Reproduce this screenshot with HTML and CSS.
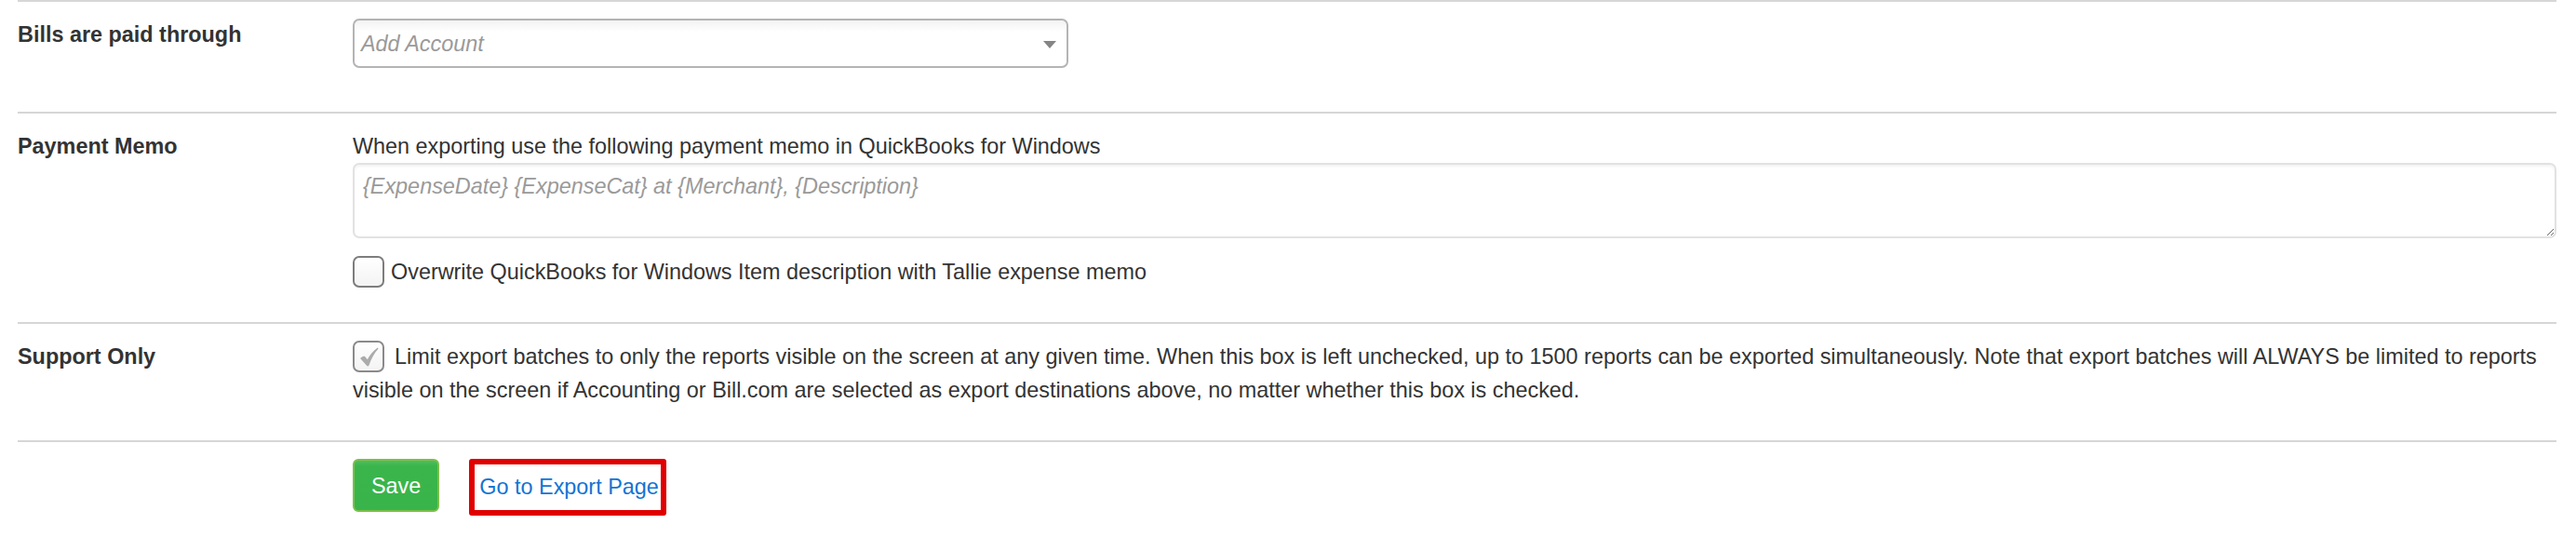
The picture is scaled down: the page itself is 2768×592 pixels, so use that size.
FILE: index.html
```html
<!DOCTYPE html>
<html lang="en">
<head>
    <meta charset="UTF-8">
    <meta name="viewport" content="width=device-width, initial-scale=1.0">
    <title>Export Settings</title>
    <link rel="stylesheet" href="styles.css">
</head>
<body>
    <form class="settings">
        <div class="setting-row">
            <div class="setting-label">Bills are paid through</div>
            <div class="setting-field">
                <div class="account-select">
                    <span class="account-placeholder">Add Account</span>
                    <span class="select-arrow"></span>
                </div>
            </div>
        </div>

        <div class="setting-row">
            <div class="setting-label">Payment Memo</div>
            <div class="setting-field">
                <p>When exporting use the following payment memo in QuickBooks for Windows</p>
                <textarea class="memo" placeholder="{ExpenseDate} {ExpenseCat} at {Merchant}, {Description}"></textarea>
                <label class="check-line">
                    <span class="check-box"></span>Overwrite QuickBooks for Windows Item description with Tallie expense memo
                </label>
            </div>
        </div>

        <div class="setting-row">
            <div class="setting-label">Support Only</div>
            <div class="setting-field">
                <p class="support-text"><span class="check-box checked"><svg viewBox="0 0 20 20" width="21" height="21"><path d="M1 11.5 C2.5 9.8 4.2 8.8 5.6 9.4 L8.4 12.6 C10.8 8 14 4 18.6 0.8 C19.4 0.6 19.8 1.3 19.3 1.9 C15.4 6.2 12.4 11.6 10 18.6 C9.5 19.7 8.2 19.8 7.6 18.8 Z" fill="#ababab"/></svg></span>Limit export batches to only the reports visible on the screen at any given time. When this box is left unchecked, up to 1500 reports can be exported simultaneously. Note that export batches will ALWAYS be limited to reports visible on the screen if Accounting or Bill.com are selected as export destinations above, no matter whether this box is checked.</p>
            </div>
        </div>

        <div class="setting-row last">
            <div class="setting-label"></div>
            <div class="setting-field actions">
                <button type="button" class="btn-save">Save</button>
                <a href="#" class="export-link">Go to Export Page</a>
            </div>
        </div>
    </form>
</body>
</html>
```

FILE: styles.css
```css
*,
*::before,
*::after{
    box-sizing: border-box;
}
body{
    margin: 0;
    background-color: #ffffff;
    color: #333333;
    font-family: "Liberation Sans", Arial, Helvetica, sans-serif;
    font-size: 23.4px;
    line-height: 36px;
}
p{
    margin: 0;
}
.settings{
    padding: 0 21px 0 19px;
}
.setting-row{
    display: flex;
    border-top: 2px solid #d6d6d6;
    padding: 17px 0 36px;
}
.setting-row.last{
    padding-bottom: 40px;
}
.setting-label{
    width: 360px;
    flex: none;
    font-weight: bold;
}
.setting-field{
    flex: 1;
    min-width: 0;
}

/* select2 style dropdown */
.account-select{
    width: 769px;
    height: 53px;
    margin: 1px 0 11px;
    border: 2px solid #b4b4b4;
    border-radius: 7px;
    background: linear-gradient(to bottom, #f2f2f2 0, #ffffff 12px, #ffffff 100%);
    display: flex;
    align-items: center;
    justify-content: space-between;
    padding: 0 11px 0 7px;
}
.account-placeholder{
    color: #9a9a9a;
    font-style: italic;
}
.select-arrow{
    width: 0;
    height: 0;
    border-left: 7px solid transparent;
    border-right: 7px solid transparent;
    border-top: 8px solid #858585;
    margin-top: 2px;
}

.memo{
    display: block;
    width: 100%;
    height: 81px;
    margin: 0;
    padding: 5px 9px 8px;
    border: 2px solid #e2e2e2;
    border-radius: 7px;
    box-shadow: inset 0 2px 3px rgba(0,0,0,0.05);
    font-family: inherit;
    font-size: 23.4px;
    line-height: 36px;
    color: #333333;
    resize: vertical;
    outline: none;
}
.memo::placeholder{
    color: #9a9a9a;
    font-style: italic;
}
.check-line{
    display: block;
    margin-top: 18px;
}
.check-box{
    display: inline-flex;
    align-items: center;
    justify-content: center;
    vertical-align: top;
    width: 34px;
    height: 34px;
    margin: 1px 7px 0 0;
    border: 2px solid #7d7d7d;
    border-radius: 7px;
    background: linear-gradient(to bottom, #ffffff, #f3f3f3);
}
.check-box.checked{
    margin-right: 11px;
    border-color: #8a8a8a;
}

.actions{
    display: flex;
    align-items: flex-start;
    gap: 32px;
    padding-top: 1px;
}
.btn-save{
    height: 57px;
    padding: 0 18px;
    border: 2px solid #7cbf4a;
    border-radius: 6px;
    background: linear-gradient(to bottom, #4fbd5e 0, #3ab54c 6px, #38b44b 100%);
    color: #ffffff;
    font-family: inherit;
    font-size: 23.4px;
    line-height: 36px;
}
.export-link{
    display: inline-block;
    border: 6px solid #e00000;
    border-radius: 3px;
    padding: 6px 2px 7px 5px;
    color: #1274d3;
    text-decoration: none;
}
```
